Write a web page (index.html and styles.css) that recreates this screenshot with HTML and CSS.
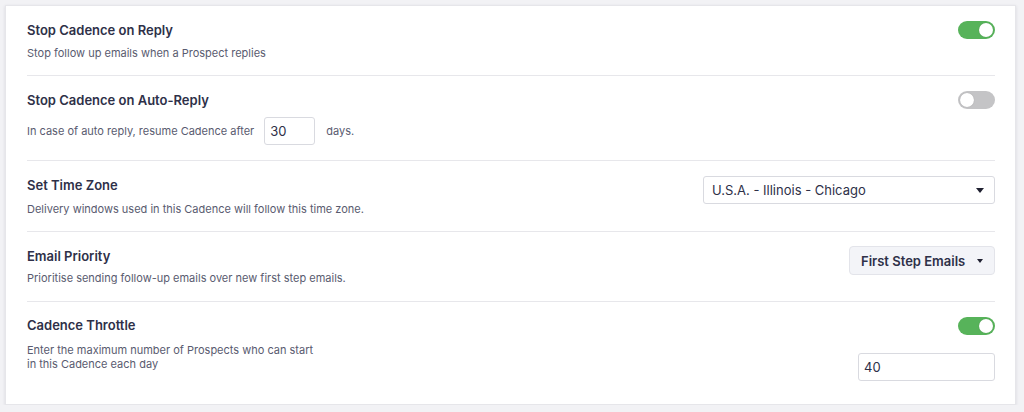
FILE: index.html
```html
<!DOCTYPE html>
<html>
<head>
<meta charset="utf-8">
<link rel="stylesheet" href="styles.css">
</head>
<body>
<div class="card">
  <div class="row row-1">
    <div class="left">
      <div class="title">Stop Cadence on Reply</div>
      <div class="desc">Stop follow up emails when a Prospect replies</div>
    </div>
    <div class="right">
      <span class="toggle on"><span class="knob"></span></span>
    </div>
  </div>

  <div class="row row-2">
    <div class="left">
      <div class="title">Stop Cadence on Auto-Reply</div>
      <div class="inline">
        <span class="desc">In case of auto reply, resume Cadence after</span>
        <span class="field field-days">30</span>
        <span class="desc">days.</span>
      </div>
    </div>
    <div class="right">
      <span class="toggle"><span class="knob"></span></span>
    </div>
  </div>

  <div class="row row-3">
    <div class="left">
      <div class="title">Set Time Zone</div>
      <div class="desc">Delivery windows used in this Cadence will follow this time zone.</div>
    </div>
    <div class="right">
      <div class="select">
        <span>U.S.A. - Illinois - Chicago</span>
        <span class="caret"></span>
      </div>
    </div>
  </div>

  <div class="row row-4">
    <div class="left">
      <div class="title">Email Priority</div>
      <div class="desc">Prioritise sending follow-up emails over new first step emails.</div>
    </div>
    <div class="right">
      <div class="button">
        <span>First Step Emails</span>
        <span class="caret"></span>
      </div>
    </div>
  </div>

  <div class="row row-5">
    <div class="left">
      <div class="title">Cadence Throttle</div>
      <div class="desc two">Enter the maximum number of Prospects who can start<br>in this Cadence each day</div>
    </div>
    <div class="right stack">
      <span class="toggle on"><span class="knob"></span></span>
      <span class="field field-throttle">40</span>
    </div>
  </div>
</div>
</body>
</html>
```

FILE: styles.css
```css
* { box-sizing: border-box; }

html, body {
  margin: 0;
  padding: 0;
  background: #f2f2f5;
  font-family: Inter, "Noto Sans", sans-serif;
  color: #2e3048;
}

.card {
  margin: 5px 8px 0 5px;
  width: 1011px;
  height: 400px;
  background: #ffffff;
  border: 1px solid #e6e6ea;
  box-shadow: 0 1px 3px rgba(30, 30, 60, 0.12);
  padding: 0 20px 0 21px;
}

.row {
  display: flex;
  justify-content: space-between;
  align-items: flex-start;
  border-bottom: 1px solid #e7e7eb;
}

.row-5 { border-bottom: none; }

.title {
  font-size: 13px;
  line-height: 16px;
  font-weight: 600;
  color: #2e3048;
}

.desc {
  font-size: 11px;
  line-height: 16px;
  color: #595b6f;
}

.desc.two { line-height: 14px; }

.row-1 { padding: 16px 0 14px; }
.row-1 .desc { margin-top: 7px; }

.row-2 { padding: 16px 0 15px; }
.row-2 .inline {
  display: flex;
  align-items: center;
  margin-top: 9px;
}

.row-3 { padding: 16px 0 14px; }
.row-3 .desc { margin-top: 8px; }

.row-4 { padding: 16px 0 15px; }
.row-4 .desc { margin-top: 6px; }

.row-5 { padding: 15px 0 0; }
.row-5 .desc { margin-top: 10px; }

.toggle {
  position: relative;
  display: block;
  width: 37px;
  height: 18px;
  border-radius: 9px;
  background: #c4c4c6;
  margin-top: -1px;
}
.toggle.on { background: #57b35a; }

.knob {
  position: absolute;
  top: 2px;
  left: 2px;
  width: 14px;
  height: 14px;
  border-radius: 50%;
  background: #ffffff;
  box-shadow: 0 0 1px rgba(0, 0, 0, 0.25);
}
.toggle.on .knob { left: 21px; }

.field {
  display: inline-flex;
  align-items: center;
  height: 28px;
  border: 1px solid #d9dae0;
  border-radius: 3px;
  background: #fff;
  font-size: 13px;
  color: #2e3048;
  padding-left: 5px;
}

.field-days {
  width: 51px;
  margin: 0 11px 0 10px;
}

.select {
  display: flex;
  align-items: center;
  justify-content: space-between;
  width: 292px;
  height: 28px;
  margin-top: -1px;
  border: 1px solid #d9dae0;
  border-radius: 3px;
  padding: 0 10px 0 8px;
  font-size: 13px;
  color: #2e3048;
}

.caret {
  width: 0;
  height: 0;
  border-left: 4.5px solid transparent;
  border-right: 4.5px solid transparent;
  border-top: 5px solid #1f2030;
}

.button {
  display: flex;
  align-items: center;
  justify-content: space-between;
  width: 146px;
  height: 29px;
  margin-top: -2px;
  background: #f3f4f8;
  border: 1px solid #e3e4ea;
  border-radius: 4px;
  padding: 0 11px 0 11px;
  font-size: 13px;
  font-weight: 600;
  color: #2e3048;
}
.button .caret {
  border-left-width: 3.5px;
  border-right-width: 3.5px;
  border-top-width: 4px;
}

.stack {
  display: flex;
  flex-direction: column;
  align-items: flex-end;
}
.stack .toggle { margin-top: 0; }

.field-throttle {
  width: 137px;
  margin-top: 18px;
}
```
